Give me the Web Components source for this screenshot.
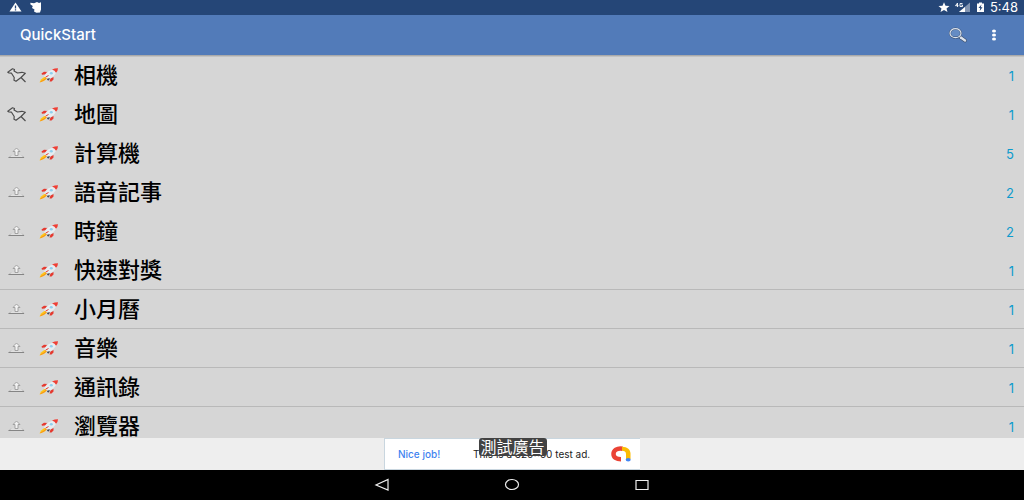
<!DOCTYPE html>
<html lang="zh-Hant">
<head>
<meta charset="utf-8">
<meta name="viewport" content="width=device-width, initial-scale=1">
<title>QuickStart</title>
<style>
html, body { margin: 0; height: 100%; }
body { font-family: Inter, "Noto Sans CJK TC", sans-serif; background: #d6d6d6; }
</style>
</head>
<body>
<quick-app></quick-app>
<script>
function define(name, html) {
  const template = document.createElement('template');
  template.innerHTML = html;
  customElements.define(name, class extends HTMLElement {
    constructor() {
      super();
      this.attachShadow({ mode: 'open' }).append(template.content.cloneNode(true));
    }
  });
}

define('status-bar', `
<style>
:host { display: flex; justify-content: space-between; align-items: center; flex: none; height: 15px; padding: 0 6px 0 9px; background: #254677; color: #fff; }
div { display: flex; align-items: center; }
.left { gap: 8px; }
.right { gap: 5px; }
svg { display: block; }
time { font-size: 13px; line-height: 15px; }
</style>
<div class="left">
  <svg width="13" height="15" viewBox="0 0 13 15"><path d="M6.500 2.500 12.500 11.500H.500Z" fill="#fff"/><path d="M6.500 5.500v3M6.500 9.300v1.200" stroke="#254677" stroke-width="1.300"/></svg>
  <svg width="13" height="15" viewBox="0 0 13 15"><path d="M.3 2.700 4 3.200 7 2 9 3 11 2.300V9.500L10 12.500 6.500 12.800 4 11.500 4.500 9.500 2 8 2.800 6 .500 4.500Z" fill="#fff"/></svg>
</div>
<div class="right">
  <svg width="12" height="15" viewBox="0 0 12 15"><path d="m6 2.300 1.500 3.500 4 .2-3 2.500 1 3.500L6 10l-3.500 2 1-3.500L.5 6l4-.2Z" fill="#fff"/></svg>
  <svg width="16" height="15" viewBox="0 0 16 15"><path d="M15 2.500V12H4Z" fill="#8194b1"/><path d="M10 7v5H4Z" fill="#fff"/><path d="M2.500 3v4M.500 5.700H3.500M2.500 3 .500 5.700M7.500 3.500H5v3H7.500V5H6.300" fill="none" stroke="#fff" stroke-width=".9"/></svg>
  <svg width="9" height="15" viewBox="0 0 9 15"><path d="M1 3.500H3V2.500H6V3.500H8V12H1Z" fill="#fff"/><path d="M5.500 4.500 2.500 8H4.200L3.700 11 6.500 7.300H4.800Z" fill="#254677"/></svg>
  <time>5:48</time>
</div>`);

define('app-bar', `
<style>
:host { display: flex; align-items: center; flex: none; height: 40px; padding: 0 20px; box-sizing: border-box; background: #527bb9; color: #fff; }
h1 { margin: 0; flex: 1; font-size: 15px; line-height: 20px; font-weight: 500; }
button { border: 0; padding: 0; background: none; height: 40px; }
.more { margin-left: 16px; }
svg { display: block; }
</style>
<h1><slot></slot></h1>
<button aria-label="搜尋"><svg width="20" height="16" viewBox="0 0 20 16"><path d="m12 10 5 3.500" stroke="#3c4c67" stroke-width="3.600" stroke-linecap="round"/><path d="m12.500 10.300 4.500 3.200" stroke="#dbe3ee" stroke-width="2.400" stroke-linecap="round"/><ellipse cx="7.500" cy="6.200" rx="5.500" ry="4.500" fill="#658cc4" stroke="#3d5375" stroke-width="2.200"/><ellipse cx="7.500" cy="6.200" rx="5.500" ry="4.500" fill="none" stroke="#dbe3ee" stroke-width="1.200"/></svg></button>
<button class="more" aria-label="更多選項"><svg width="20" height="12" viewBox="0 0 20 12"><g fill="#fff"><ellipse cx="10" cy="2" rx="2" ry="1.500"/><ellipse cx="10" cy="6" rx="2" ry="1.500"/><ellipse cx="10" cy="10" rx="2" ry="1.500"/></g></svg></button>`);

const PIN = '<svg width="20" height="16" viewBox="0 0 20 16"><path d="M.8 4.200 5.500.8 7.500 1.500 7 3 10.500 5 15 4.300 18.300 5.300 14 9.500 9 13.300 7 12.200 7.200 9.500 4.500 5.200 2 5ZM14 9.500 18.500 14" fill="#dedede" stroke="#4d4d4d" stroke-width="1.200" stroke-linejoin="round"/></svg>';
const UP = '<svg width="20" height="16" viewBox="0 0 20 16"><path d="M2 11.500 4 9.500H15L17 11.500Z" fill="#e0e0e0"/><path d="M2 11.500 4 9.500M15 9.500 17 11.500" stroke="#b5b5b5"/><path d="M1.500 11.500H17" stroke="#858585"/><path d="M9.500 2 13 5.500H11V9.500H8V5.500H6Z" fill="#f2f2f2" stroke="#9b9b9b" stroke-width=".9"/></svg>';

const rowTemplate = document.createElement('template');
rowTemplate.innerHTML = `
<style>
:host { display: flex; align-items: center; box-sizing: border-box; height: 39px; padding: 2px 10px 0 7px; border-bottom: 1px solid transparent; }
:host([divided]) { border-color: #b9b9b9; }
button { border: 0; padding: 0; background: none; flex: none; }
svg { display: block; }
.rocket { flex: none; margin: 0 15px 0 12px; }
a { flex: 1; color: #000; text-decoration: none; font-family: Roboto, "Noto Sans CJK TC", sans-serif; font-size: 22px; line-height: 30px; font-weight: 500; }
.count { color: #0c9bcd; font-size: 13px; line-height: 20px; }
</style>
<button aria-label="釘選"></button>
<svg class="rocket" width="20" height="16" viewBox="0 0 20 16">
  <path d="M.5 14.500 2 11.500 6 8.500 8 10.500 5 13Z" fill="#ffc517"/>
  <path d="M1.500 13.800 5 12 7.500 10" stroke="#f78d1e" fill="none"/>
  <path d="M2.500 5.500 5 3.800 9 4 7.500 6.300 3 6.800ZM11.500 10.500 14.500 9 14.500 11.500 12.500 13.500 10.500 13.500Z" fill="#e5392f"/>
  <path d="M5 8.500C7 4 11 1.500 18 .7 17.500 5.500 15 8.700 9.500 11Z" fill="#e6edf1"/>
  <path d="M13 1.500Q16 .2 19 .3 19 3 17 4.700 16 2.500 13 1.500Z" fill="#ef3f35"/>
  <path d="M8.500 10.500 11 10.300 9.800 12.500 8 12Z" fill="#454a5c"/>
  <path d="m6.500 9.200 3-1.700" stroke="#e5392f"/>
  <ellipse cx="12.300" cy="5.300" rx="1.500" ry="1.300" fill="#8fcfed"/>
</svg>
<a href="#"><slot></slot></a>
<span class="count"></span>`;

customElements.define('app-row', class extends HTMLElement {
  constructor() {
    super();
    this.attachShadow({ mode: 'open' }).append(rowTemplate.content.cloneNode(true));
  }
  connectedCallback() {
    this.shadowRoot.querySelector('button').innerHTML = this.hasAttribute('pinned') ? PIN : UP;
    this.shadowRoot.querySelector('.count').textContent = this.getAttribute('count');
  }
});

define('app-list', `
<style>
:host { display: block; flex: 1; min-height: 0; overflow: hidden; background: #d6d6d6; border-top: 1px solid #aaa; box-shadow: inset 0 1px #c2c2c2; }
ul { list-style: none; margin: 0; padding: 0; }
</style>
<ul>
  <li><app-row pinned count="1">相機</app-row></li>
  <li><app-row pinned count="1">地圖</app-row></li>
  <li><app-row count="5">計算機</app-row></li>
  <li><app-row count="2">語音記事</app-row></li>
  <li><app-row count="2">時鐘</app-row></li>
  <li><app-row divided count="1">快速對獎</app-row></li>
  <li><app-row divided count="1">小月曆</app-row></li>
  <li><app-row divided count="1">音樂</app-row></li>
  <li><app-row divided count="1">通訊錄</app-row></li>
  <li><app-row count="1">瀏覽器</app-row></li>
</ul>`);

define('ad-banner', `
<style>
:host { display: flex; justify-content: center; flex: none; height: 32px; background: #eee; }
.ad { position: relative; display: flex; align-items: center; box-sizing: border-box; width: 25%; min-width: 256px; padding: 0 9px 0 13px; background: #fff; border: 1px solid #c9d6df; border-right: 0; font-size: 10px; line-height: 14px; color: #222; }
a { color: #3f83f0; text-decoration: none; font-weight: 500; width: 75px; }
.body { flex: 1; white-space: nowrap; }
.tag { position: absolute; top: -1px; left: 50%; transform: translateX(-50%); padding: 0 2px; border-radius: 3px; background: #424242; color: #fff; font-size: 16px; line-height: 18px; white-space: nowrap; }
</style>
<div class="ad">
  <a href="#">Nice job!</a>
  <span class="body">This is a 320x50 test ad.</span>
  <svg width="20" height="16" viewBox="0 0 20 16"><path d="M11.500 2.700C6 1.800 2.500 4.500 2.500 8S5.500 13.300 10 13.300" fill="none" stroke="#ea4335" stroke-width="4.500"/><path d="M11 .7C16.500.7 19.500 4 19.500 7.500V13H15V8C15 6 13.500 4.800 11 4.800Z" fill="#fbbc04"/><ellipse cx="17.200" cy="13.800" rx="2.500" ry="1.800" fill="#4285f4"/></svg>
  <span class="tag">測試廣告</span>
</div>`);

define('nav-bar', `
<style>
:host { display: flex; justify-content: center; align-items: center; flex: none; height: 30px; background: #000; }
button { border: 0; padding: 0; background: none; width: 130px; height: 30px; }
svg { display: block; margin: 0 auto; }
g { fill: none; stroke: #eee; stroke-width: 1.200; }
</style>
<button aria-label="返回"><svg width="16" height="14" viewBox="0 0 16 14"><g><path d="M14 1.500V12L2 7Z"/></g></svg></button>
<button aria-label="主畫面"><svg width="16" height="14" viewBox="0 0 16 14"><g><ellipse cx="8" cy="6.500" rx="6.500" ry="5"/></g></svg></button>
<button aria-label="最近"><svg width="16" height="14" viewBox="0 0 16 14"><g><path d="M2 2.500H14V11.500H2Z"/></g></svg></button>`);

define('quick-app', `
<style>
:host { display: flex; flex-direction: column; height: 100vh; }
</style>
<status-bar></status-bar>
<app-bar>QuickStart</app-bar>
<app-list></app-list>
<ad-banner></ad-banner>
<nav-bar></nav-bar>`);
</script>
</body>
</html>
